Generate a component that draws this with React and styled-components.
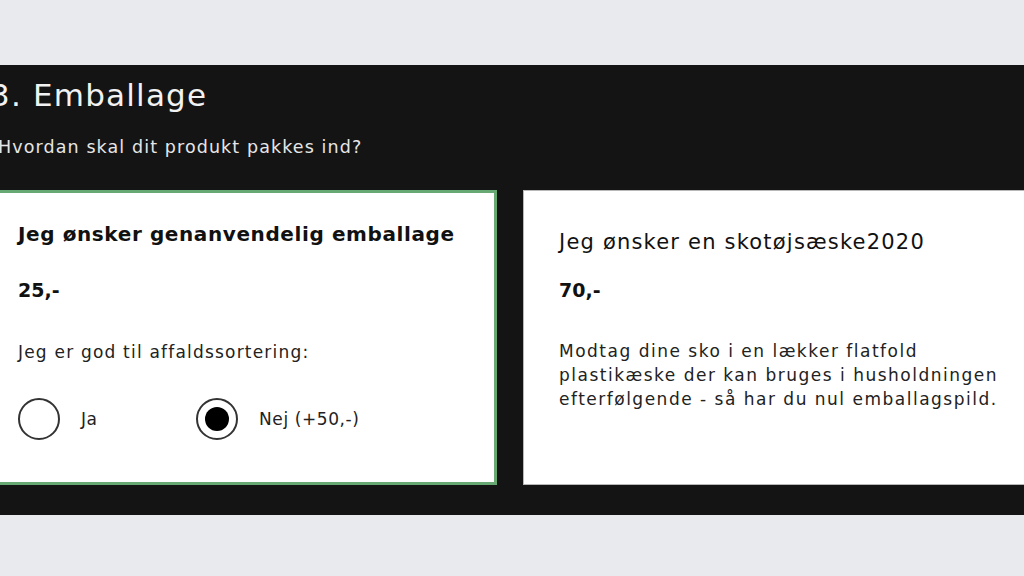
import React, { useState } from 'react';
import styled, { createGlobalStyle } from 'styled-components';

const GlobalStyle = createGlobalStyle`
  html, body {
    margin: 0;
    padding: 0;
    background: #e8eaed;
    font-family: "DejaVu Sans", Inter, sans-serif;
    overflow: hidden;
  }
`;

const Page = styled.div`
  width: 1024px;
  height: 576px;
  padding-top: 65px;
  box-sizing: border-box;
`;

const Panel = styled.section`
  background: #141414;
  height: 450px;
  box-sizing: border-box;
  padding: 10px 0 0;
  overflow: hidden;
`;

const Inner = styled.div`
  margin-left: -18px;
  width: 1100px;
`;

const Heading = styled.h2`
  margin: 0 0 0 8px;
  font-size: 31px;
  font-weight: 400;
  letter-spacing: 1.2px;
  color: #f2f2f2;
  line-height: 40px;
`;

const Subtitle = styled.p`
  margin: 20px 0 0 16px;
  font-size: 17.5px;
  letter-spacing: 1.1px;
  color: #e6e6e6;
  line-height: 24px;
`;

const Options = styled.div`
  display: flex;
  gap: 26px;
  margin-top: 31px;
`;

const Card = styled.div`
  width: 515px;
  height: 295px;
  box-sizing: border-box;
  background: #fff;
  border: ${p => (p.$selected ? '3px solid #68a872' : '1px solid #b8b8b8')};
  padding: ${p => (p.$selected ? '27px 33px' : '37px 35px')};
  color: #111;
  cursor: pointer;
`;

const CardTitle = styled.h3`
  margin: 0;
  font-size: ${p => (p.$bold ? '20px' : '21px')};
  line-height: 28px;
  font-weight: ${p => (p.$bold ? 700 : 400)};
  letter-spacing: ${p => (p.$bold ? '0.6px' : '1.2px')};
`;

const Price = styled.div`
  margin-top: ${p => p.$gap}px;
  font-size: 19px;
  font-weight: 700;
  line-height: 28px;
`;

const Label = styled.p`
  margin: 36px 0 0;
  font-size: 17px;
  letter-spacing: 1.2px;
  line-height: 24px;
  color: #222;
`;

const Description = styled.p`
  margin: 35px 0 0;
  font-size: 17px;
  letter-spacing: 1.5px;
  line-height: 24px;
  color: #222;
`;

const RadioRow = styled.div`
  display: flex;
  align-items: center;
  margin-top: 34px;
`;

const RadioOption = styled.label`
  display: flex;
  align-items: center;
  gap: 21px;
  width: 178px;
  font-size: 17px;
  letter-spacing: 0.6px;
  color: #222;
  cursor: pointer;
`;

const Circle = styled.span`
  width: 42px;
  height: 42px;
  border-radius: 50%;
  border: 2px solid #333;
  box-sizing: border-box;
  display: flex;
  align-items: center;
  justify-content: center;

  &::after {
    content: '';
    width: 24px;
    height: 24px;
    border-radius: 50%;
    background: #000;
    display: ${p => (p.$checked ? 'block' : 'none')};
  }
`;

export default function App() {
  const [sorting, setSorting] = useState('nej');

  return (
    <Page>
      <GlobalStyle />
      <Panel>
        <Inner>
          <Heading>3. Emballage</Heading>
          <Subtitle>Hvordan skal dit produkt pakkes ind?</Subtitle>
          <Options>
            <Card $selected>
              <CardTitle $bold>Jeg ønsker genanvendelig emballage</CardTitle>
              <Price $gap={28}>25,-</Price>
              <Label>Jeg er god til affaldssortering:</Label>
              <RadioRow>
                <RadioOption onClick={() => setSorting('ja')}>
                  <Circle $checked={sorting === 'ja'} />
                  Ja
                </RadioOption>
                <RadioOption onClick={() => setSorting('nej')}>
                  <Circle $checked={sorting === 'nej'} />
                  Nej (+50,-)
                </RadioOption>
              </RadioRow>
            </Card>
            <Card>
              <CardTitle>Jeg ønsker en skotøjsæske2020</CardTitle>
              <Price $gap={20}>70,-</Price>
              <Description>
                Modtag dine sko i en lækker flatfold
                <br />
                plastikæske der kan bruges i husholdningen
                <br />
                efterfølgende - så har du nul emballagspild.
              </Description>
            </Card>
          </Options>
        </Inner>
      </Panel>
    </Page>
  );
}
